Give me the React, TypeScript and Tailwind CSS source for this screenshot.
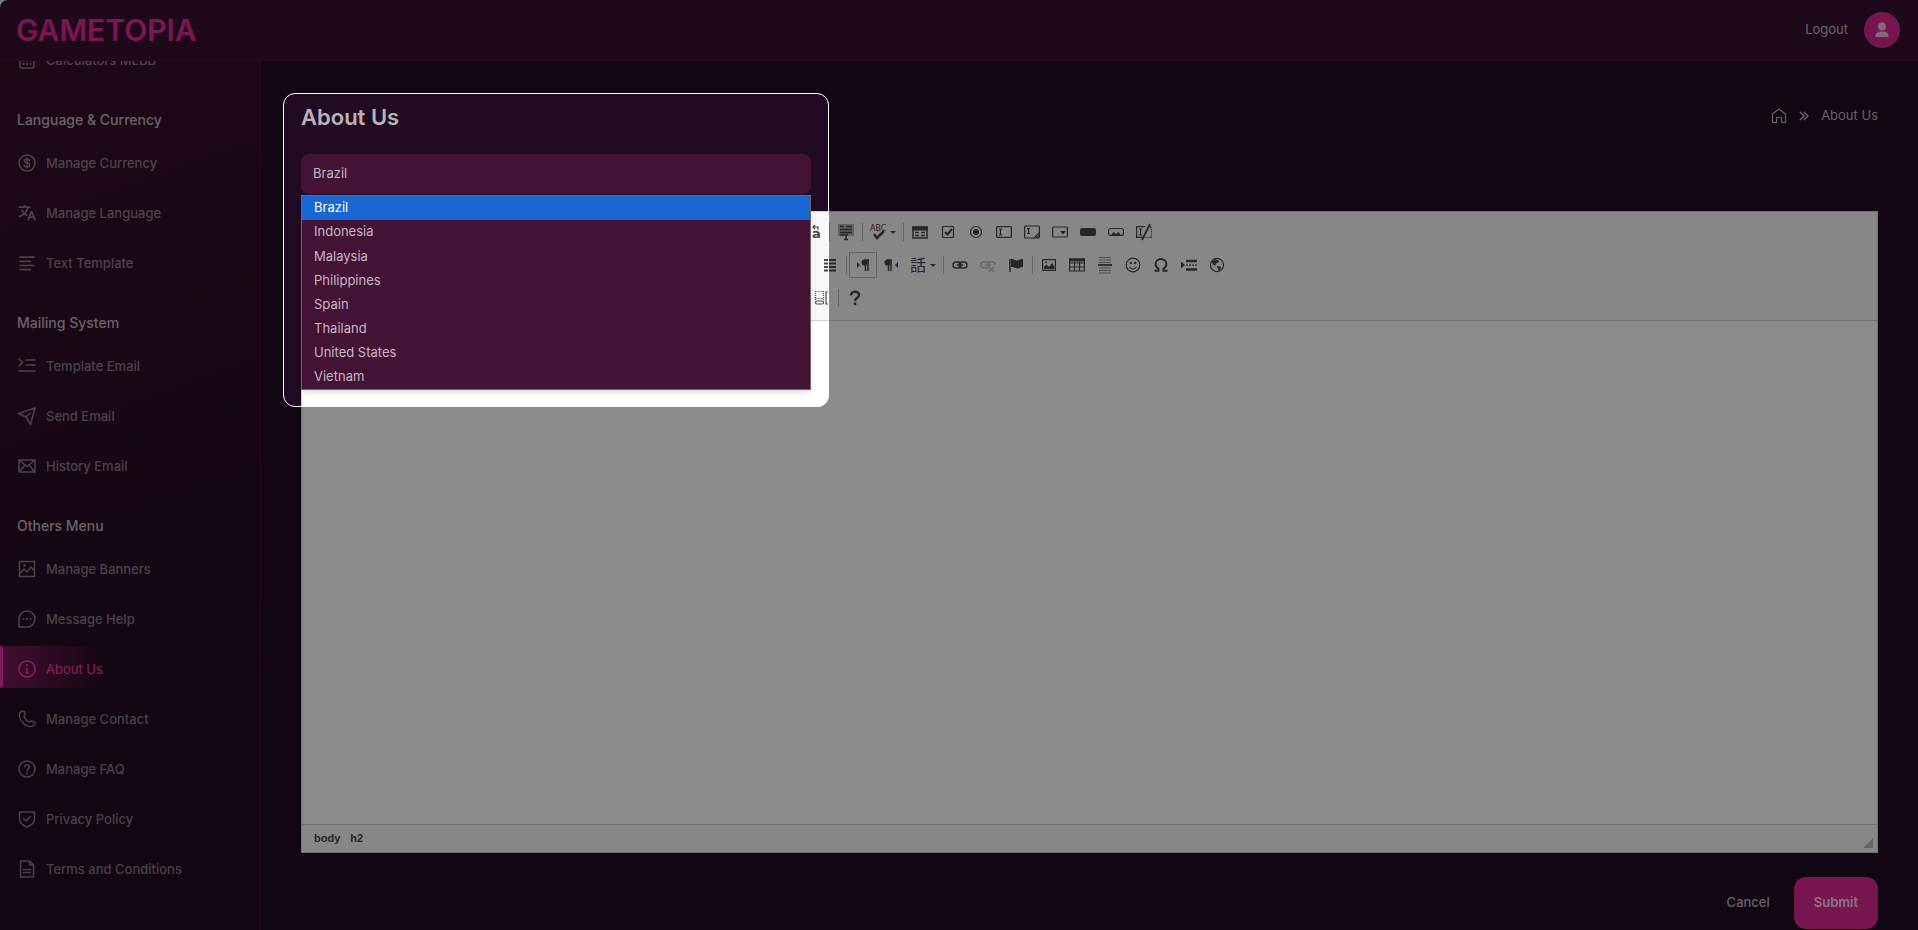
import type { ReactNode } from 'react';
import { RiTranslate2, RiAlignLeft } from 'react-icons/ri';

type Glyph = () => ReactNode;

interface MenuItem { label: string; icon: Glyph; active?: boolean }
interface MenuSection { title?: string; items: MenuItem[] }

const Line = ({ children }: { children: ReactNode }) => (
  <svg viewBox="0 0 20 20" className="w-5 h-5" fill="none" stroke="currentColor" strokeWidth="1.5" strokeLinejoin="round" strokeLinecap="round">{children}</svg>
);

const CalculatorIcon = () => <Line><rect x="3" y="2" width="14" height="16" rx="1.5" /><path d="M3 7h14" /><path d="M6.500 10.500h.01M10 10.500h.01M13.500 10.500h.01M6.500 14h.01M10 14h.01M13.500 14h.01" strokeWidth="2.200" /></Line>;
const CoinIcon = () => <Line><circle cx="10" cy="10" r="8" /><path d="M12.700 7.800c-.2-1-1.200-1.600-2.700-1.600-1.600 0-2.700.7-2.700 1.900 0 2.700 5.500 1.200 5.500 3.900 0 1.200-1.200 1.900-2.800 1.900s-2.700-.7-2.900-1.800M10 4.900v10.300" strokeWidth="1.400" /></Line>;
const TemplateIcon = () => <Line><path d="M2 3l3.500 3.500L2 10M9 4h9M9 9h9M2 15h16" /></Line>;
const SendIcon = () => <Line><path d="M1.500 7.500L18 2l-4.500 16.500-4.500-7.500zM9 11l4-4" /></Line>;
const MailIcon = () => <Line><path d="M2 4h16v12H2zM2 4l8 6.500L18 4M2 16l6-7M18 16l-6-7" /></Line>;
const ImageIcon = () => <Line><path d="M2.500 2.500h15v15h-15zM3 14l4-4 3 3 4-5 3.500 4" /><circle cx="7.500" cy="6.500" r=".6" fill="currentColor" /></Line>;
const ChatIcon = () => <Line><path d="M2 18V10a8 8 0 1 1 8 8z" /><path d="M6.500 10h.01M10 10h.01M13.500 10h.01" strokeWidth="2" /></Line>;
const InfoIcon = () => <Line><circle cx="10" cy="10" r="8" /><path d="M10 6h.01" strokeWidth="2" /><path d="M9 9.500h1V14M8.800 14h2.400" strokeWidth="1.300" /></Line>;
const PhoneIcon = () => <Line><path d="M5 2.300c1.500-.6 2.600.2 2.800 1.600.3 1.700-.3 2.300-.8 3 .5 2.800 3 5.300 5.800 6 1-.9 1.700-1 3-.7 1.500.4 2.200 1.200 2.200 2.200 0 1.700-2.300 3.300-4.700 3.100C7.500 17 2.600 11.500 2.300 6.300 2.300 4.500 3.300 3 5 2.300z" /></Line>;
const HelpIcon = () => <Line><circle cx="10" cy="10" r="8" /><path d="M7.700 8a2.300 2.300 0 1 1 3.500 2c-.8.500-1.200.900-1.200 1.700" /><path d="M10 14.300h.01" strokeWidth="2" /></Line>;
const ShieldIcon = () => <Line><path d="M2.500 3h15v7c0 4-3.500 6.500-7.500 8-4-1.500-7.500-4-7.500-8zM6.500 9.500L9 12l4.500-4.500" /></Line>;
const DocIcon = () => <Line><path d="M3.500 2h9l4 4v12h-13zM12.500 2v4h4M6.500 10.500h7M6.500 13.500h7" /></Line>;

const SECTIONS: MenuSection[] = [
  { items: [{ label: 'Calculators MLBB', icon: CalculatorIcon }] },
  {
    title: 'Language & Currency',
    items: [
      { label: 'Manage Currency', icon: CoinIcon },
      { label: 'Manage Language', icon: () => <RiTranslate2 size={20} /> },
      { label: 'Text Template', icon: () => <RiAlignLeft size={20} /> },
    ],
  },
  {
    title: 'Mailing System',
    items: [
      { label: 'Template Email', icon: TemplateIcon },
      { label: 'Send Email', icon: SendIcon },
      { label: 'History Email', icon: MailIcon },
    ],
  },
  {
    title: 'Others Menu',
    items: [
      { label: 'Manage Banners', icon: ImageIcon },
      { label: 'Message Help', icon: ChatIcon },
      { label: 'About Us', icon: InfoIcon, active: true },
      { label: 'Manage Contact', icon: PhoneIcon },
      { label: 'Manage FAQ', icon: HelpIcon },
      { label: 'Privacy Policy', icon: ShieldIcon },
      { label: 'Terms and Conditions', icon: DocIcon },
    ],
  },
];

const COUNTRIES = ['Brazil', 'Indonesia', 'Malaysia', 'Philippines', 'Spain', 'Thailand', 'United States', 'Vietnam'];

export default function App() {
  return (
    <div className="relative h-screen overflow-hidden flex flex-col bg-[#210b22] font-['Inter',sans-serif] text-[13px] text-white/70">
      <Header />
      <div className="flex flex-1 min-h-0">
        <Sidebar />
        <main className="flex-1 min-w-0 flex flex-col px-10 pt-8 pb-px">
          <div className="flex items-start justify-between h-[118px]">
            <CountryPicker />
            <Breadcrumb />
          </div>
          <Editor />
          <div className="flex justify-end items-center gap-6 mt-6">
            <button className="font-medium">Cancel</button>
            <button className="h-[52px] px-5 rounded-xl bg-[#da2892] font-semibold text-white/80">Submit</button>
          </div>
        </main>
      </div>
    </div>
  );
}

function Header() {
  return (
    <div className="bg-[#e4e2ea] flex-shrink-0">
      <header className="h-[61px] flex items-center justify-between pl-4 pr-[18px] rounded-tl-lg bg-[#36122e] border-b border-[#4a1039]">
        <a href="#" className="text-[30px] leading-8 font-semibold text-[#e22a97]">GAMETOPIA</a>
        <div className="flex items-center gap-4">
          <button>Logout</button>
          <button aria-label="Profile" className="w-9 h-9 rounded-full bg-[#da2892] flex items-center justify-center">
            <svg viewBox="0 0 16 16" className="w-4 h-4" fill="currentColor">
              <circle cx="8" cy="4.500" r="4" />
              <path d="M1.500 15v-1.500C1.500 11 4 9.500 8 9.500s6.500 1.500 6.500 4V15z" />
            </svg>
          </button>
        </div>
      </header>
    </div>
  );
}

function Sidebar() {
  return (
    <aside className="w-[261px] flex-shrink-0 overflow-hidden flex flex-col justify-end pb-[42px] border-r border-[#4a1039] bg-linear-160 from-[#370f2a] to-[#210b22] to-80%">
      {SECTIONS.map((section, i) => (
        <section key={i} className="flex-shrink-0 pt-[31px]">
          {section.title && <h2 className="px-[17px] mb-[10px] text-sm leading-5 font-medium">{section.title}</h2>}
          <nav className="flex flex-col gap-2">
            {section.items.map(item => <NavLink key={item.label} {...item} />)}
          </nav>
        </section>
      ))}
    </aside>
  );
}

function NavLink({ label, icon: ItemIcon, active }: MenuItem) {
  return (
    <a href="#" className={`relative h-[42px] flex items-center gap-[9px] px-[17px] pt-1 ${active
      ? 'text-[#f83bb0] bg-linear-to-r from-[#7c1a56] to-transparent to-40%'
      : 'text-white/45 font-medium'}`}>
      {active && <span className="absolute left-0 top-0 h-full w-[3px] rounded-r bg-[#f02fa5]" />}
      <ItemIcon />
      <span className="pt-0.5">{label}</span>
    </a>
  );
}

function CountryPicker() {
  return (
    <div className="relative w-[510px]">
      <h1 className="pt-2 text-[22px] leading-8 font-semibold">About Us</h1>
      <div className="relative mt-[21px]">
        <select aria-label="Country" defaultValue="Brazil" className="block appearance-none w-full h-10 px-3 rounded-lg bg-[#441235] text-[#c5b8c3]">
          {COUNTRIES.map(c => <option key={c}>{c}</option>)}
        </select>
        <ul className="absolute z-10 left-0 top-[41px] w-full h-[195px] flex flex-col border border-[#75666f] bg-[#441235] text-[#c5b8c3] shadow-md">
          {COUNTRIES.map(c => (
            <li key={c} className={`flex-1 flex items-center px-3 ${c === 'Brazil' ? 'bg-[#1967d2] text-white' : ''}`}>{c}</li>
          ))}
        </ul>
      </div>
      {/* spotlight: everything outside of it is dimmed by the spread shadow */}
      <div className="absolute z-20 pointer-events-none top-0 -inset-x-[18px] h-[314px] border border-white rounded-xl shadow-[0_0_0_3000px_rgba(0,0,0,0.455)]" />
    </div>
  );
}

function Breadcrumb() {
  return (
    <nav aria-label="Breadcrumb" className="flex items-center gap-3 pt-[13px]">
      <a href="#" aria-label="Home">
        <svg viewBox="0 0 16 16" className="w-4 h-4" fill="none" stroke="currentColor" strokeWidth="1.2" strokeLinejoin="round">
          <path d="M1.500 6L8 1l6.500 5v8.500h-4V9.500h-5v5h-4z" />
        </svg>
      </a>
      <svg viewBox="0 0 10 10" className="w-[10px] h-[10px]" fill="none" stroke="currentColor" strokeWidth="1.500"><path d="M1 1l4 4-4 4M5 1l4 4-4 4" /></svg>
      <span>About Us</span>
    </nav>
  );
}

const Ico = ({ children, w = 16 }: { children: ReactNode; w?: number }) => (
  <svg viewBox={`0 0 ${w} 16`} width={w} height={16} className="overflow-visible" fill="none" stroke="currentColor" strokeWidth="1.200">{children}</svg>
);

const Tool = ({ label, children, on, off }: { label: string; children: ReactNode; on?: boolean; off?: boolean }) => (
  <button aria-label={label} title={label} className={`w-7 h-[26px] flex items-center justify-center ${on ? 'border border-[#bcbcbc]' : ''} ${off ? 'opacity-30' : ''}`}>{children}</button>
);

const Sep = () => <span className="w-px h-[18px] mx-0.5 bg-[#bcbcbc]" />;
const Caret = () => <path d="M20 7h6l-3 3z" fill="currentColor" stroke="none" />;

function Editor() {
  return (
    <section className="flex-1 min-h-0 flex flex-col bg-white border border-[#d1d1d1] text-[#484848]">
      <div className="bg-[#f8f8f8] border-b border-[#d1d1d1] pt-[7px] pb-[9px] flex flex-col gap-[7px]">
        <div className="flex items-center h-[26px] pl-[497px]">
          <Tool label="Replace">
            <Ico><text x="7" y="14" fontSize="13" fontWeight="700" fill="currentColor" stroke="none" className="font-['DejaVu_Sans']">a</text><path d="M2 8h3M2 12h3M8 3h5v3M10 1L8 3l2 2" /></Ico>
          </Tool>
          <Sep />
          <Tool label="Select All">
            <Ico><path d="M0 0h16v12H0z" fill="currentColor" stroke="none" opacity=".4" /><path d="M2 2.500h4M8 2.500h6M2 5.500h12M2 8.500h12M2 11h8M8 12v4M6 15.500h4" strokeWidth="1.500" /></Ico>
          </Tool>
          <Sep />
          <button aria-label="Spell Check" className="w-9 h-[26px] flex items-center justify-center">
            <Ico w={26}><text x="0" y="7" fontSize="8" fill="currentColor" stroke="none" className="font-['DejaVu_Sans']">ABC</text><path d="M4 10l3 4 7-7" strokeWidth="2.500" /><Caret /></Ico>
          </button>
          <Sep />
          <Tool label="Form"><Ico><path d="M1 3h14v11H1zM3 8.500h4M3 11.500h4M9 8.500h4M9 11.500h4" strokeWidth="1.500" /><path d="M1 3h14v3H1z" fill="currentColor" /></Ico></Tool>
          <Tool label="Checkbox"><Ico><rect x="2.500" y="2.500" width="11" height="11" rx="1" /><path d="M5 8l2.500 2.500L12 5" strokeWidth="2" /></Ico></Tool>
          <Tool label="Radio Button"><Ico><circle cx="8" cy="8" r="5.500" /><circle cx="8" cy="8" r="3" fill="currentColor" stroke="none" /></Ico></Tool>
          <Tool label="Text Field"><Ico><rect x=".6" y="2.600" width="14.800" height="10.800" rx="1" /><path d="M3 5h3M4.500 5v6M3 11h3" /></Ico></Tool>
          <Tool label="Textarea"><Ico><rect x=".6" y="2" width="14.800" height="12" rx="1" /><path d="M3 4.500h3M4.500 4.500v5M3 9.500h3M10 14l5-5M12.500 14l2.500-2.500" /></Ico></Tool>
          <Tool label="Selection Field"><Ico><rect x=".6" y="3" width="14.800" height="10" rx="1" /><path d="M8 7h6l-3 3.500z" fill="currentColor" stroke="none" /></Ico></Tool>
          <Tool label="Button"><Ico><rect x=".6" y="4.500" width="14.800" height="7" rx="1.500" fill="currentColor" /></Ico></Tool>
          <Tool label="Image Button"><Ico><rect x=".6" y="4.500" width="14.800" height="7" rx="2" /><path d="M3 11l2.500-3L8 10l2.500-2 2.500 3z" fill="currentColor" stroke="none" /></Ico></Tool>
          <Tool label="Hidden Field"><Ico><path d="M9 2.600H.6v10.800H7M3 5h3M4.500 5v6M3 11h3" /><path d="M12 2.600h3.400v10.800H8" strokeDasharray="1 1" /><path d="M14 0L6 16" strokeWidth="1.800" /></Ico></Tool>
        </div>
        <div className="flex items-center h-[26px] pl-[514px]">
          <Tool label="Justify"><Ico w={12}><path d="M0 3h12M0 6.500h12M0 10h12M0 13.500h12" strokeWidth="2" /></Ico></Tool>
          <Sep />
          <Tool label="Left to right" on><Ico><path d="M2 5v6l3-3z" fill="currentColor" stroke="none" /><path d="M10.500 3v11M13 3v11M9 3h5" strokeWidth="1.500" /><circle cx="9.500" cy="5.500" r="2.500" fill="currentColor" /></Ico></Tool>
          <Tool label="Right to left"><Ico><path d="M15 5v6l-3-3z" fill="currentColor" stroke="none" /><path d="M5.500 3v11M8 3v11M4 3h5" strokeWidth="1.500" /><circle cx="4.500" cy="5.500" r="2.500" fill="currentColor" /></Ico></Tool>
          <button aria-label="Language" className="w-9 h-[26px] flex items-center justify-center">
            <Ico w={26}><text x="0" y="14" fontSize="16" fill="currentColor" stroke="none" className="font-['Noto_Sans_CJK_JP',sans-serif]">話</text><Caret /></Ico>
          </button>
          <Sep />
          <Tool label="Link"><Ico><rect x="1" y="5" width="8" height="6" rx="3" strokeWidth="1.500" /><rect x="7" y="5" width="8" height="6" rx="3" strokeWidth="1.500" /><path d="M5 8h6" strokeWidth="1.500" /></Ico></Tool>
          <Tool label="Unlink" off><Ico><rect x="1" y="5" width="8" height="6" rx="3" strokeWidth="1.500" /><path d="M8 5h4a3 3 0 0 1 3 3M5 8h6M9 10l5 5M14 10l-5 5" strokeWidth="1.500" /></Ico></Tool>
          <Tool label="Anchor"><Ico><path d="M2 2v13" strokeWidth="1.500" /><path d="M3 2c4 0 4 1.500 6 1.500S12 2 15 2v8c-3 0-3 1.500-5 1.500S7 10 3 10z" fill="currentColor" stroke="none" /></Ico></Tool>
          <Sep />
          <Tool label="Image"><Ico><path d="M1.600 2.600h12.800v10.800H1.600z" /><path d="M3 12V9.500l2.500-2L8 10l3-4 2.500 4v2z" fill="currentColor" stroke="none" /><circle cx="5" cy="5.300" r="1" fill="currentColor" stroke="none" /></Ico></Tool>
          <Tool label="Table"><Ico><path d="M.6 2h14.800v12H.6zM.6 6h14.800M.6 10h14.800M5.500 5v9M10.500 5v9" /><path d="M0 1.500h16v3H0z" fill="currentColor" stroke="none" /></Ico></Tool>
          <Tool label="Horizontal Line"><Ico><path d="M2 .5h12M2 3h12M2 5.500h12M2 11h12M2 13.500h12M2 16h12" strokeWidth="1" opacity=".6" /><path d="M1 8h14" strokeWidth="1.800" /></Ico></Tool>
          <Tool label="Smiley"><Ico><circle cx="8" cy="8" r="6.800" /><path d="M4.500 10c1.500 2.500 5.500 2.500 7 0" /><circle cx="5.800" cy="6" r="1.200" fill="currentColor" stroke="none" /><circle cx="10.200" cy="6" r="1.200" fill="currentColor" stroke="none" /></Ico></Tool>
          <Tool label="Special Character"><Ico><path d="M1.500 13.800h4v-2C3.500 10.500 2.600 9 2.600 7 2.600 4 5 2 8 2s5.400 2 5.400 5c0 2-.9 3.500-2.900 4.800v2h4" strokeWidth="1.900" /></Ico></Tool>
          <Tool label="Page Break"><Ico><path d="M0 4.500v7L4 8z" fill="currentColor" stroke="none" /><path d="M5 4h11M5 12.500h11" strokeWidth="2.500" /><path d="M5 8.200h11" strokeDasharray="2 1" /></Ico></Tool>
          <Tool label="IFrame"><Ico><circle cx="8" cy="8" r="6.600" /><path d="M3 4.500L6 2.500l3 .5 1 2-3 1.500L6 9 3.500 7zM8 9l3.500.5.5 2-2.500 2.500L9 12z" fill="currentColor" stroke="none" /></Ico></Tool>
        </div>
        <div className="flex items-center h-[26px] pl-[506px]">
          <Tool label="Show Blocks"><Ico><path d="M1.500 1v9M9.500 1v9M1.500 1.500h8M1.500 8.500h8" strokeDasharray="1 1" /><rect x="1.500" y="11" width="8" height="3" rx="1.500" /><path d="M15 2h-3v12h3" /></Ico></Tool>
          <Sep />
          <Tool label="About"><Ico><path d="M4 5.500c0-5 8-5 8-.5 0 3-4 3-4 6" strokeWidth="2.400" /><path d="M6.700 12.500h2.600v2.500H6.700z" fill="currentColor" stroke="none" /></Ico></Tool>
        </div>
      </div>
      <div className="flex-1" contentEditable suppressContentEditableWarning role="textbox" aria-label="Content" />
      <div className="h-7 flex items-center justify-between pl-3 pr-1 bg-[#f8f8f8] border-t border-[#d1d1d1] font-['Liberation_Sans',sans-serif] text-[11px] font-bold">
        <div className="flex gap-[10px]"><a href="#">body</a><a href="#">h2</a></div>
        <svg viewBox="0 0 10 10" className="w-[10px] h-[10px] mt-2"><path d="M10 0v10H0z" fill="#bcbcbc" /></svg>
      </div>
    </section>
  );
}
